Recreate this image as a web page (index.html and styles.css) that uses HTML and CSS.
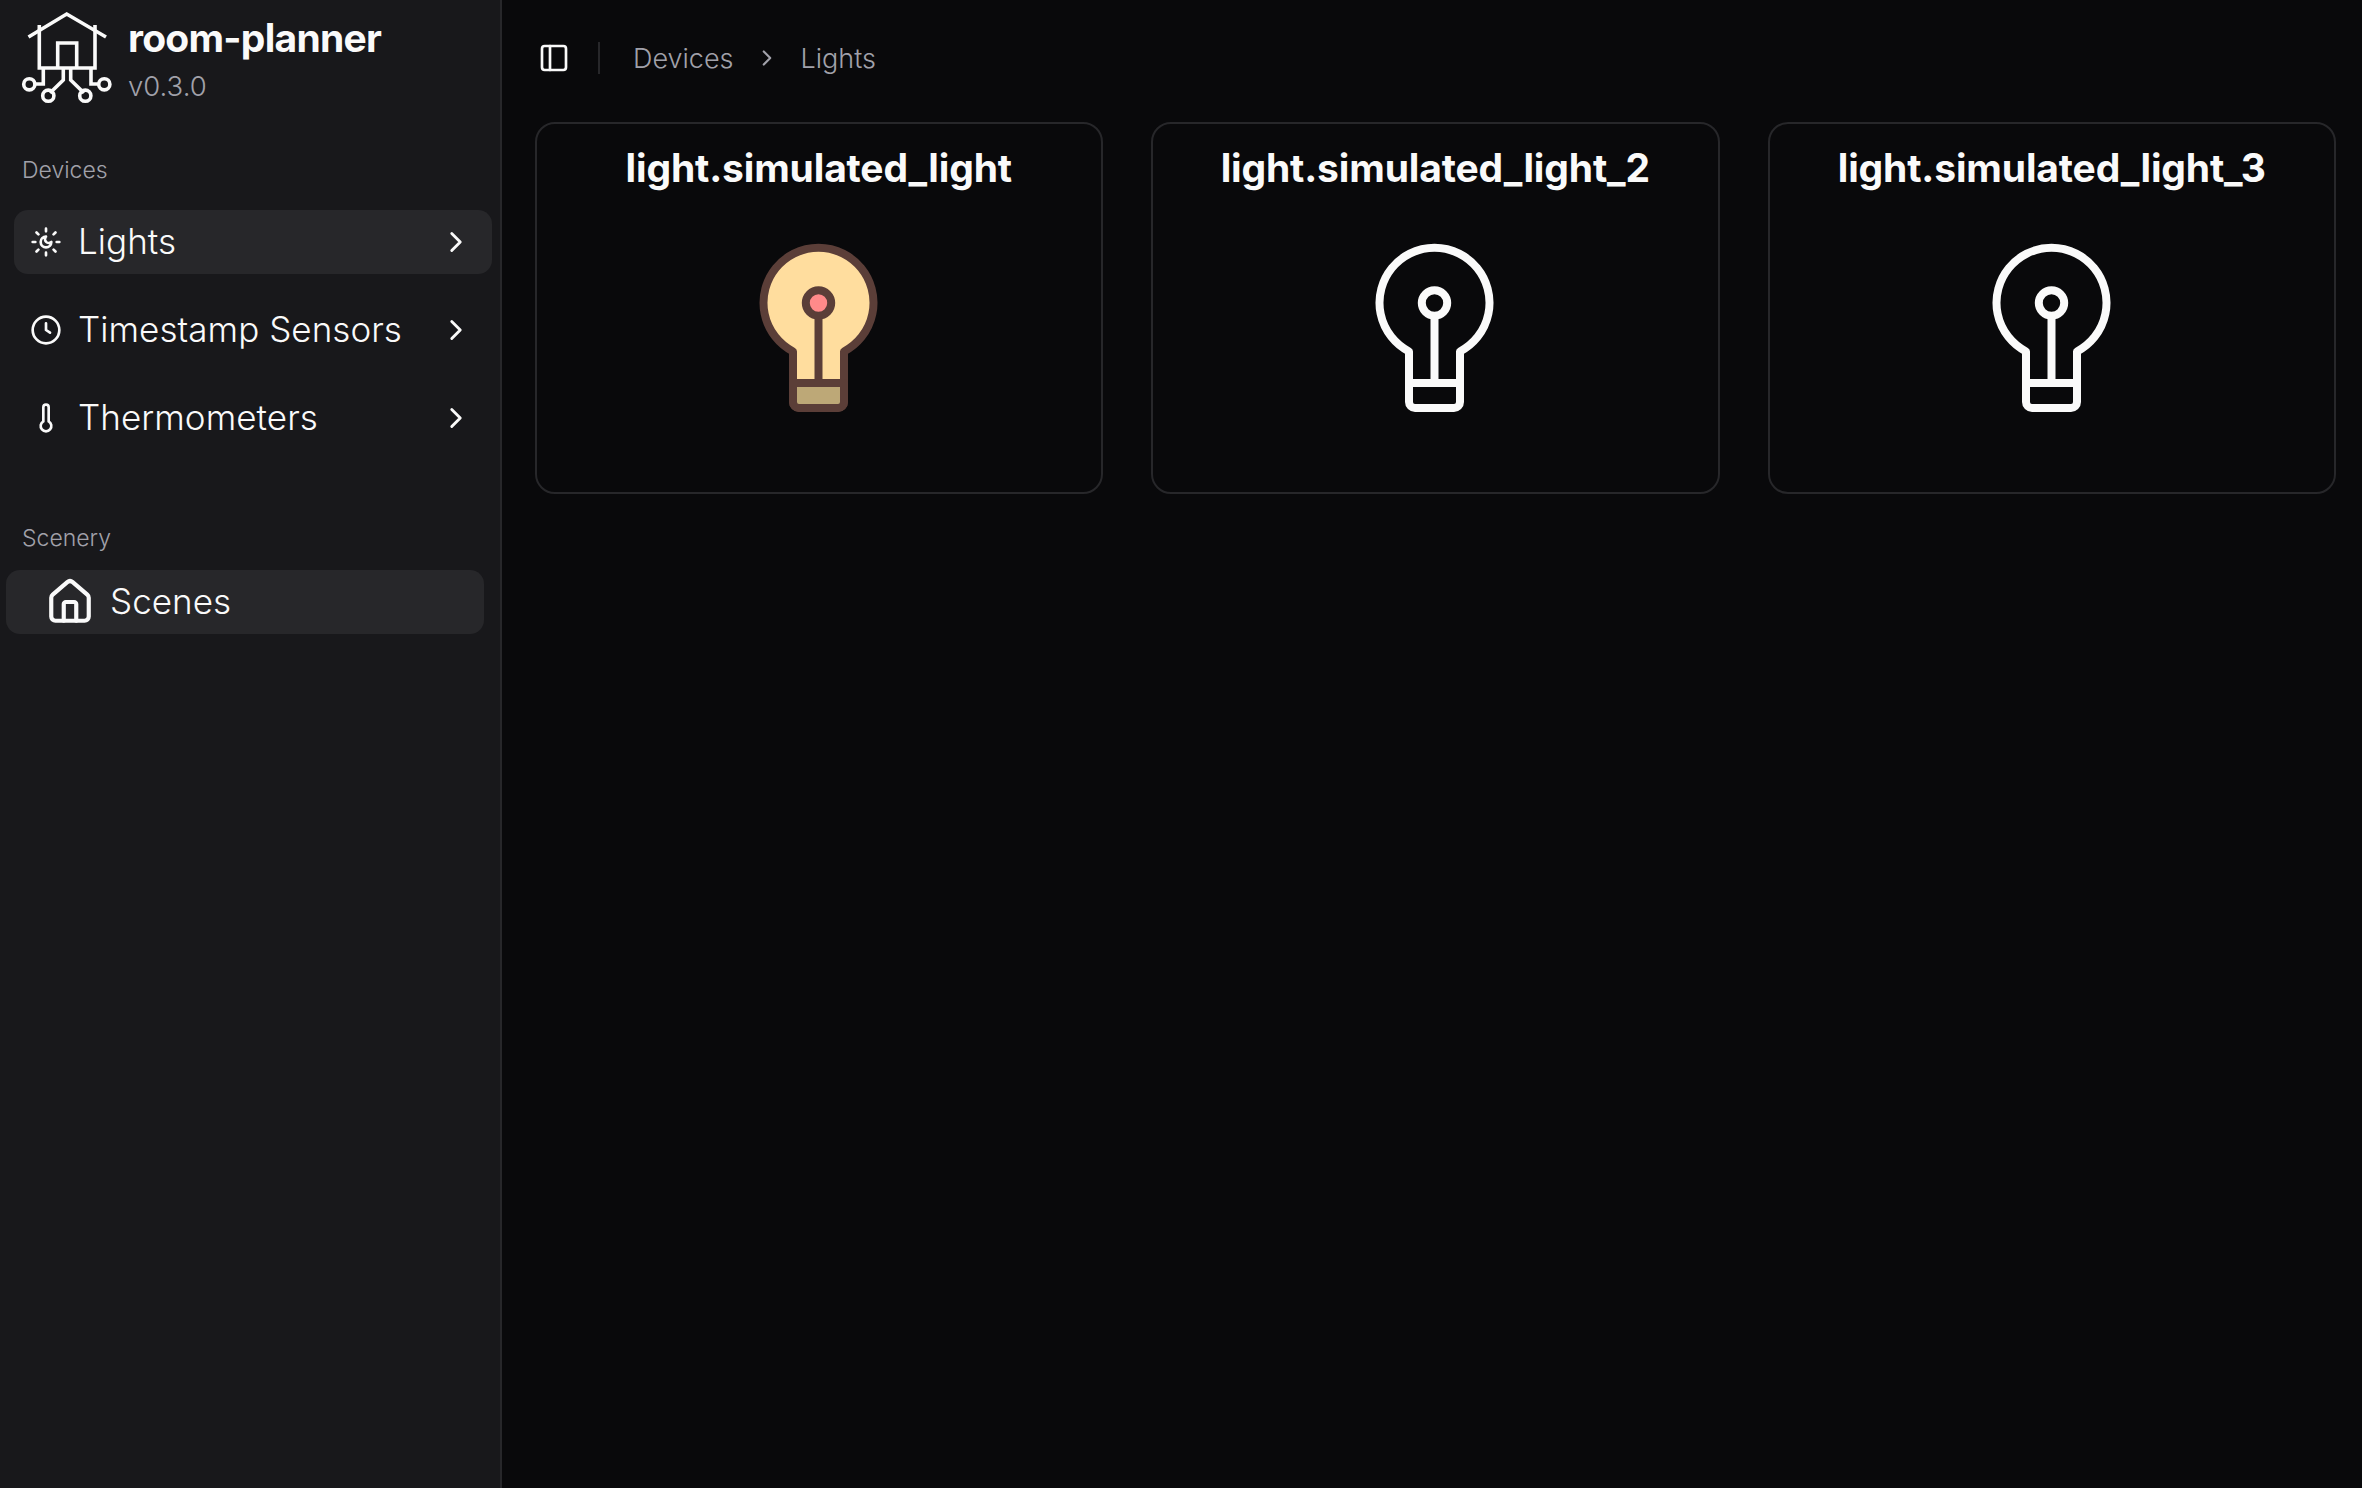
FILE: index.html
```html
<!DOCTYPE html>
<html lang="en">
<head>
    <meta charset="UTF-8">
    <meta name="viewport" content="width=device-width, initial-scale=1.0">
    <title>room-planner</title>
    <link rel="stylesheet" href="styles.css">
</head>
<body>
    <div class="layout">
        <!-- Sidebar -->
        <aside class="sidebar">
            <div class="brand">
                <svg class="brand-logo" viewBox="0 0 95 96" fill="none" stroke="currentColor" stroke-width="3.6">
                    <path d="M8.5 29 46.7 6 86 29"/>
                    <path d="M19.3 17V60H75V17"/>
                    <path d="M37.7 60V35H56.7V60"/>
                    <path d="M23.3 60V76H15"/>
                    <path d="M71 60V76H79"/>
                    <path d="M43.3 60V72L30 85"/>
                    <path d="M50.7 60V72L64 85"/>
                    <circle cx="9.3" cy="76.3" r="5.6"/>
                    <circle cx="28.3" cy="87.7" r="5.6"/>
                    <circle cx="65.3" cy="87.7" r="5.6"/>
                    <circle cx="84.3" cy="76.3" r="5.6"/>
                </svg>
                <div class="brand-text">
                    <div class="brand-name">room-planner</div>
                    <div class="brand-version">v0.3.0</div>
                </div>
            </div>

            <div class="group-label">Devices</div>
            <ul class="nav">
                <li class="nav-item active">
                    <svg class="nav-icon" viewBox="0 0 24 24">
                        <path d="M12 8a2.83 2.83 0 0 0 4 4 4 4 0 1 1-4-4"/>
                        <path d="M12 2v2M12 20v2m-7.1-17.1 1.4 1.4m11.4 11.4 1.4 1.4M2 12h2m16 0h2M6.3 17.7l-1.4 1.4M19.1 4.9l-1.4 1.4"/>
                    </svg>
                    <span class="nav-text">Lights</span>
                    <svg class="nav-chevron" viewBox="0 0 24 24"><path d="m9 18 6-6-6-6"/></svg>
                </li>
                <li class="nav-item">
                    <svg class="nav-icon" viewBox="0 0 24 24">
                        <circle cx="12" cy="12" r="10"/>
                        <path d="M12 7v5l3 2"/>
                    </svg>
                    <span class="nav-text">Timestamp Sensors</span>
                    <svg class="nav-chevron" viewBox="0 0 24 24"><path d="m9 18 6-6-6-6"/></svg>
                </li>
                <li class="nav-item">
                    <svg class="nav-icon" viewBox="0 0 24 24">
                        <path d="M14 4v10.54a4 4 0 1 1-4 0V4a2 2 0 0 1 4 0Z"/>
                    </svg>
                    <span class="nav-text">Thermometers</span>
                    <svg class="nav-chevron" viewBox="0 0 24 24"><path d="m9 18 6-6-6-6"/></svg>
                </li>
            </ul>

            <div class="group-label scenery">Scenery</div>
            <div class="scene-link">
                <svg class="scene-icon" viewBox="0 0 24 24">
                    <path d="M15 21v-8a1 1 0 0 0-1-1h-4a1 1 0 0 0-1 1v8"/>
                    <path d="M3 10a2 2 0 0 1 .709-1.528l7-5.999a2 2 0 0 1 2.582 0l7 5.999A2 2 0 0 1 21 10v9a2 2 0 0 1-2 2H5a2 2 0 0 1-2-2z"/>
                </svg>
                <span class="nav-text">Scenes</span>
            </div>
        </aside>

        <!-- Main content -->
        <main class="content">
            <header class="topbar">
                <svg class="panel-icon" viewBox="0 0 24 24">
                    <rect x="3" y="3" width="18" height="18" rx="2"/>
                    <path d="M9 3v18"/>
                </svg>
                <span class="divider"></span>
                <nav class="crumbs">
                    <span>Devices</span>
                    <svg class="crumb-chevron" viewBox="0 0 24 24"><path d="m9 18 6-6-6-6"/></svg>
                    <span>Lights</span>
                </nav>
            </header>

            <section class="cards">
                <div class="card">
                    <h2 class="card-title">light.simulated_light</h2>
                    <svg class="bulb bulb-on" viewBox="0 0 120 172">
                        <path class="bulb-body" d="M34 111.5V162a6 6 0 0 0 6 6H79a6 6 0 0 0 6-6V111.5A55 55 0 1 0 34 111.5Z"/>
                        <path class="bulb-base" d="M34 143H85V162a6 6 0 0 1-6 6H40a6 6 0 0 1-6-6Z"/>
                        <path d="M59.5 76V143"/>
                        <circle class="bulb-dot" cx="59.5" cy="63" r="12.7"/>
                    </svg>
                </div>
                <div class="card">
                    <h2 class="card-title">light.simulated_light_2</h2>
                    <svg class="bulb" viewBox="0 0 120 172">
                        <path d="M34 111.5V162a6 6 0 0 0 6 6H79a6 6 0 0 0 6-6V111.5A55 55 0 1 0 34 111.5Z"/>
                        <path d="M34 143H85M59.5 76V143"/>
                        <circle cx="59.5" cy="63" r="12.7"/>
                    </svg>
                </div>
                <div class="card">
                    <h2 class="card-title">light.simulated_light_3</h2>
                    <svg class="bulb" viewBox="0 0 120 172">
                        <path d="M34 111.5V162a6 6 0 0 0 6 6H79a6 6 0 0 0 6-6V111.5A55 55 0 1 0 34 111.5Z"/>
                        <path d="M34 143H85M59.5 76V143"/>
                        <circle cx="59.5" cy="63" r="12.7"/>
                    </svg>
                </div>
            </section>
        </main>
    </div>
</body>
</html>
```

FILE: styles.css
```css
/* General Styles */
body {
    font-family: Inter, "Liberation Sans", sans-serif;
    margin: 0;
    padding: 0;
    background-color: #09090b;
    color: #fafafa;
}

.layout {
    display: flex;
    height: 1488px;
    overflow: hidden;
}

/* Sidebar Styles */
.sidebar {
    width: 500px;
    flex: none;
    background-color: #18181b;
    border-right: 2px solid #27272a;
}

.brand {
    display: flex;
    align-items: flex-start;
    gap: 13px;
    padding: 8px 0 0 20px;
    height: 104px;
}

.brand-logo {
    width: 95px;
    height: 96px;
    flex: none;
}

.brand-name {
    font-size: 39px;
    font-weight: 700;
    line-height: 46px;
    margin-top: 7px;
    letter-spacing: -0.75px;
}

.brand-version {
    font-size: 27.5px;
    font-weight: 350;
    line-height: 40px;
    margin-top: 5px;
    color: #a1a1aa;
}

.group-label {
    font-size: 23px;
    font-weight: 350;
    line-height: 32px;
    color: #a1a1aa;
    margin: 42px 0 0 22px;
}

.group-label.scenery {
    margin-top: 72px;
}

.nav {
    list-style-type: none;
    margin: 24px 0 0 14px;
    padding: 0;
    width: 478px;
    display: flex;
    flex-direction: column;
    gap: 24px;
}

.nav-item {
    display: flex;
    align-items: center;
    height: 64px;
    padding: 0 19px 0 16px;
    border-radius: 14px;
}

.nav-item.active {
    background-color: #27272a;
}

.nav-icon,
.nav-chevron,
.scene-icon,
.panel-icon,
.crumb-chevron {
    fill: none;
    stroke: currentColor;
    stroke-width: 2;
    stroke-linecap: round;
    stroke-linejoin: round;
    flex: none;
}

.nav-icon {
    width: 32px;
    height: 32px;
    margin-right: 16px;
}

.nav-chevron {
    width: 34px;
    height: 34px;
    margin-left: auto;
}

.nav-text {
    font-size: 35px;
    font-weight: 350;
    letter-spacing: 0.05px;
    padding-bottom: 2px;
}

.scene-link {
    display: flex;
    align-items: center;
    width: 478px;
    height: 64px;
    margin: 16px 0 0 6px;
    padding-left: 39px;
    box-sizing: border-box;
    border-radius: 14px;
    background-color: #27272a;
}

.scene-icon {
    width: 50px;
    height: 50px;
    margin-right: 15px;
}

/* Main Content Styles */
.content {
    flex: 1;
    min-width: 0;
    padding: 0 26px 0 32.5px;
}

.topbar {
    display: flex;
    align-items: center;
    height: 116px;
    padding-left: 3.5px;
    box-sizing: border-box;
}

.panel-icon {
    width: 32px;
    height: 32px;
}

.divider {
    width: 2px;
    height: 32px;
    margin: 0 33px 0 28px;
    background-color: #27272a;
}

.crumbs {
    display: flex;
    align-items: center;
    gap: 20.5px;
    font-size: 27px;
    font-weight: 350;
    color: #a1a1aa;
}

.crumb-chevron {
    width: 26px;
    height: 26px;
}

/* Card Styles */
.cards {
    display: grid;
    grid-template-columns: repeat(3, 1fr);
    gap: 48px;
    margin-top: 6px;
}

.card {
    height: 372px;
    box-sizing: border-box;
    padding-top: 21px;
    border: 2px solid #27272a;
    border-radius: 20px;
    text-align: center;
}

.card-title {
    margin: 0;
    font-size: 39px;
    font-weight: 700;
    line-height: 46px;
    letter-spacing: -0.15px;
}

.bulb {
    display: block;
    width: 120px;
    height: 172px;
    margin: 49px auto 0;
    fill: none;
    stroke: #fafafa;
    stroke-width: 8;
    stroke-linejoin: round;
}

.bulb-on {
    stroke: #5b3e38;
}

.bulb-body {
    fill: #ffdd9e;
}

.bulb-base {
    fill: #bda877;
}

.bulb-dot {
    fill: #ff8a8a;
}
```
